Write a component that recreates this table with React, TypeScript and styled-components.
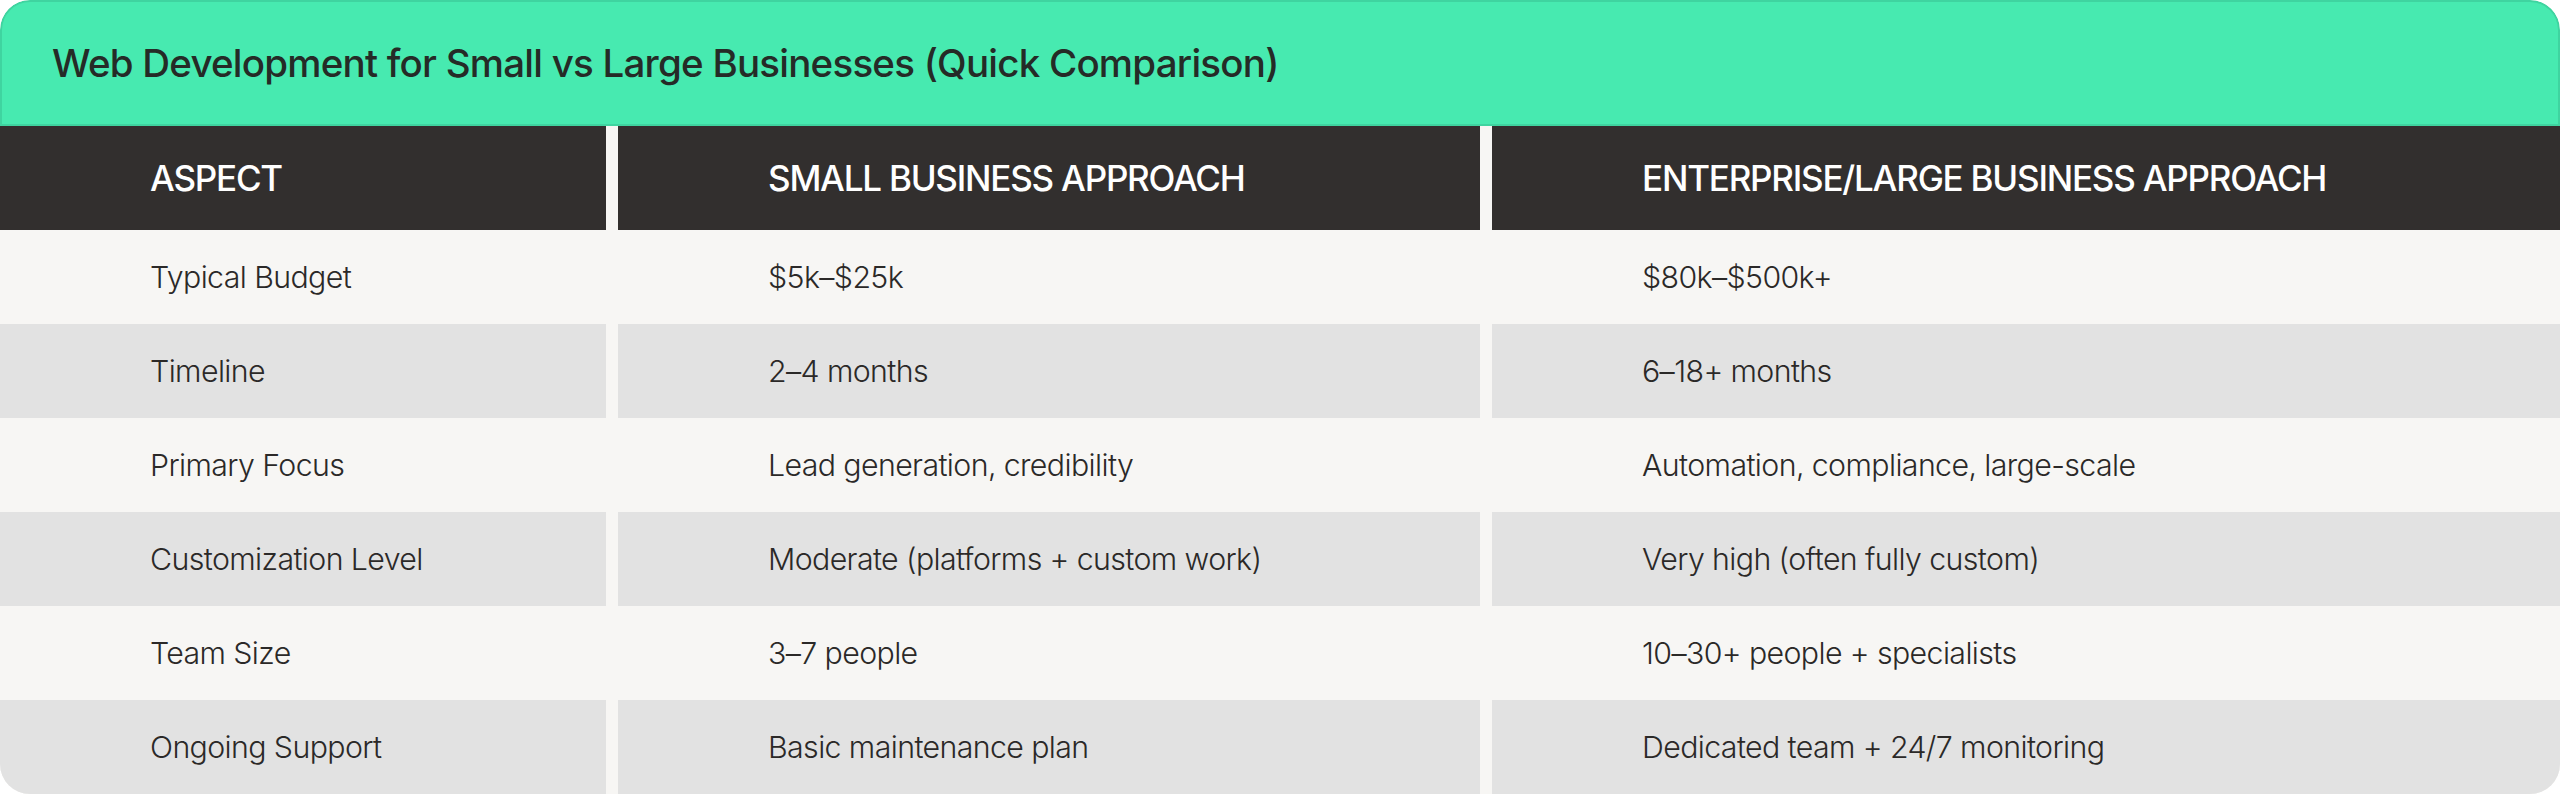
import styled, { createGlobalStyle } from 'styled-components';

const GlobalStyle = createGlobalStyle`
  html, body {
    margin: 0;
    padding: 0;
    background: #ffffff;
  }
  * {
    box-sizing: border-box;
  }
`;

type Tone = 'head' | 'light' | 'gray';

interface Row {
  aspect: string;
  small: string;
  large: string;
}

const rows: Row[] = [
  { aspect: 'Typical Budget', small: '$5k–$25k', large: '$80k–$500k+' },
  { aspect: 'Timeline', small: '2–4 months', large: '6–18+ months' },
  { aspect: 'Primary Focus', small: 'Lead generation, credibility', large: 'Automation, compliance, large-scale' },
  { aspect: 'Customization Level', small: 'Moderate (platforms + custom work)', large: 'Very high (often fully custom)' },
  { aspect: 'Team Size', small: '3–7 people', large: '10–30+ people + specialists' },
  { aspect: 'Ongoing Support', small: 'Basic maintenance plan', large: 'Dedicated team + 24/7 monitoring' },
];

const toneColors: Record<Tone, string> = {
  head: '#322f2e',
  light: '#f7f6f4',
  gray: '#e2e2e2',
};

const Card = styled.div`
  width: 2560px;
  height: 794px;
  border-radius: 30px;
  overflow: hidden;
  background: #f7f6f4;
  font-family: Inter, 'Liberation Sans', sans-serif;
  color: #2f2d2c;
  display: flex;
  flex-direction: column;
`;

const TitleBar = styled.div`
  height: 126px;
  flex: none;
  background: #47eab0;
  border: 2px solid #3fd4a0;
  border-radius: 30px 30px 0 0;
  display: flex;
  align-items: center;
  padding-left: 50px;
`;

const Title = styled.h2`
  margin: 0;
  font-size: 38.5px;
  font-weight: 500;
  letter-spacing: -0.02em;
  color: #252b27;
`;

const TableRow = styled.div<{ $height: number }>`
  display: grid;
  grid-template-columns: 606px 862px 1fr;
  column-gap: 12px;
  height: ${(p) => p.$height}px;
  flex: none;
  background: #f7f6f4;
`;

const Cell = styled.div<{ $tone: Tone }>`
  background: ${(p) => toneColors[p.$tone]};
  display: flex;
  align-items: center;
  padding-left: 150px;
  padding-right: 24px;
  white-space: nowrap;
  font-size: ${(p) => (p.$tone === 'head' ? '35px' : '30.3px')};
  font-weight: ${(p) => (p.$tone === 'head' ? 500 : 300)};
  letter-spacing: ${(p) => (p.$tone === 'head' ? '-0.035em' : '-0.02em')};
  text-transform: ${(p) => (p.$tone === 'head' ? 'uppercase' : 'none')};
  color: ${(p) => (p.$tone === 'head' ? '#ffffff' : '#2b2928')};
`;

export default function App() {
  return (
    <>
      <GlobalStyle />
      <Card>
        <TitleBar>
          <Title>Web Development for Small vs Large Businesses (Quick Comparison)</Title>
        </TitleBar>
        <TableRow $height={104}>
          <Cell $tone='head'>Aspect</Cell>
          <Cell $tone='head'>Small Business Approach</Cell>
          <Cell $tone='head'>Enterprise/Large Business Approach</Cell>
        </TableRow>
        {rows.map((row, i) => {
          const tone: Tone = i % 2 === 0 ? 'light' : 'gray';
          return (
            <TableRow key={row.aspect} $height={94}>
              <Cell $tone={tone}>{row.aspect}</Cell>
              <Cell $tone={tone}>{row.small}</Cell>
              <Cell $tone={tone}>{row.large}</Cell>
            </TableRow>
          );
        })}
      </Card>
    </>
  );
}
